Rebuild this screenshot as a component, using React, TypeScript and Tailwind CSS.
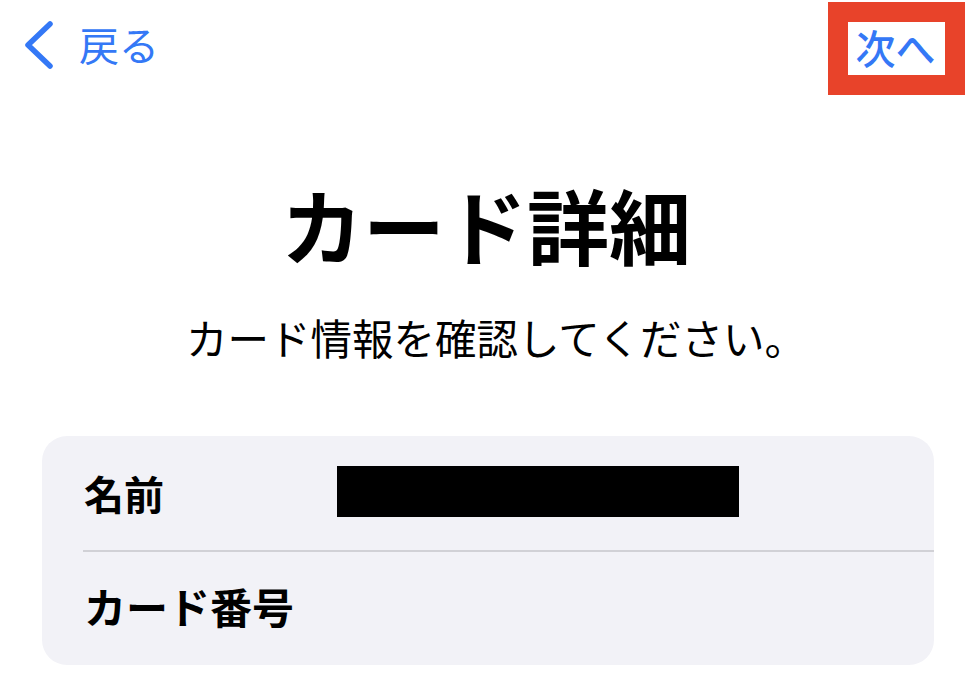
import React from "react";

const jp = { fontFamily: '"Noto Sans CJK JP", "Noto Sans", sans-serif' };

export default function App() {
  return (
    <div className="w-[972px] h-[698px] bg-white overflow-hidden relative" style={jp}>
      <div className="flex items-start justify-between h-[100px]">
        <div className="flex items-center pl-[23px] pt-[20px] gap-[25px]">
          <svg width="31" height="50" viewBox="0 0 31 50" fill="none">
            <path d="M27 4 L5 25 L27 46" stroke="#3478F6" strokeWidth="5.5" strokeLinecap="round" strokeLinejoin="round" />
          </svg>
          <span className="text-[40px] leading-none text-[#3478F6] -mt-[2px]">戻る</span>
        </div>
        <div className="mt-[2px] mr-[7px] border-[20px] border-[#E8432A] w-[137px] h-[93px] flex items-center justify-center bg-white">
          <span className="text-[40px] leading-none font-medium text-[#3478F6] -mt-[4px] -ml-[2px]">次へ</span>
        </div>
      </div>
      <div className="flex flex-col items-center">
        <h1 className="mt-[83px] text-[82px] leading-none font-bold text-black">カード詳細</h1>
        <p className="mt-[52px] ml-[20px] text-[41.5px] leading-none text-black">カード情報を確認してください。</p>
      </div>
      <div className="absolute left-[42px] top-[436px] w-[892px] h-[229px] rounded-[25px] bg-[#F2F2F7] flex flex-col">
        <div className="h-[114px] flex items-center pl-[42px]">
          <span className="w-[253px] text-[40px] leading-none font-bold text-black">名前</span>
          <div className="w-[402px] h-[51px] bg-black -mt-[4px]" />
        </div>
        <div className="ml-[41px] h-[2px] bg-[#D1D1D6]" />
        <div className="flex-1 flex items-center pl-[42px]">
          <span className="text-[42px] leading-none font-bold text-black -mt-[6px]">カード番号</span>
        </div>
      </div>
    </div>
  );
}
